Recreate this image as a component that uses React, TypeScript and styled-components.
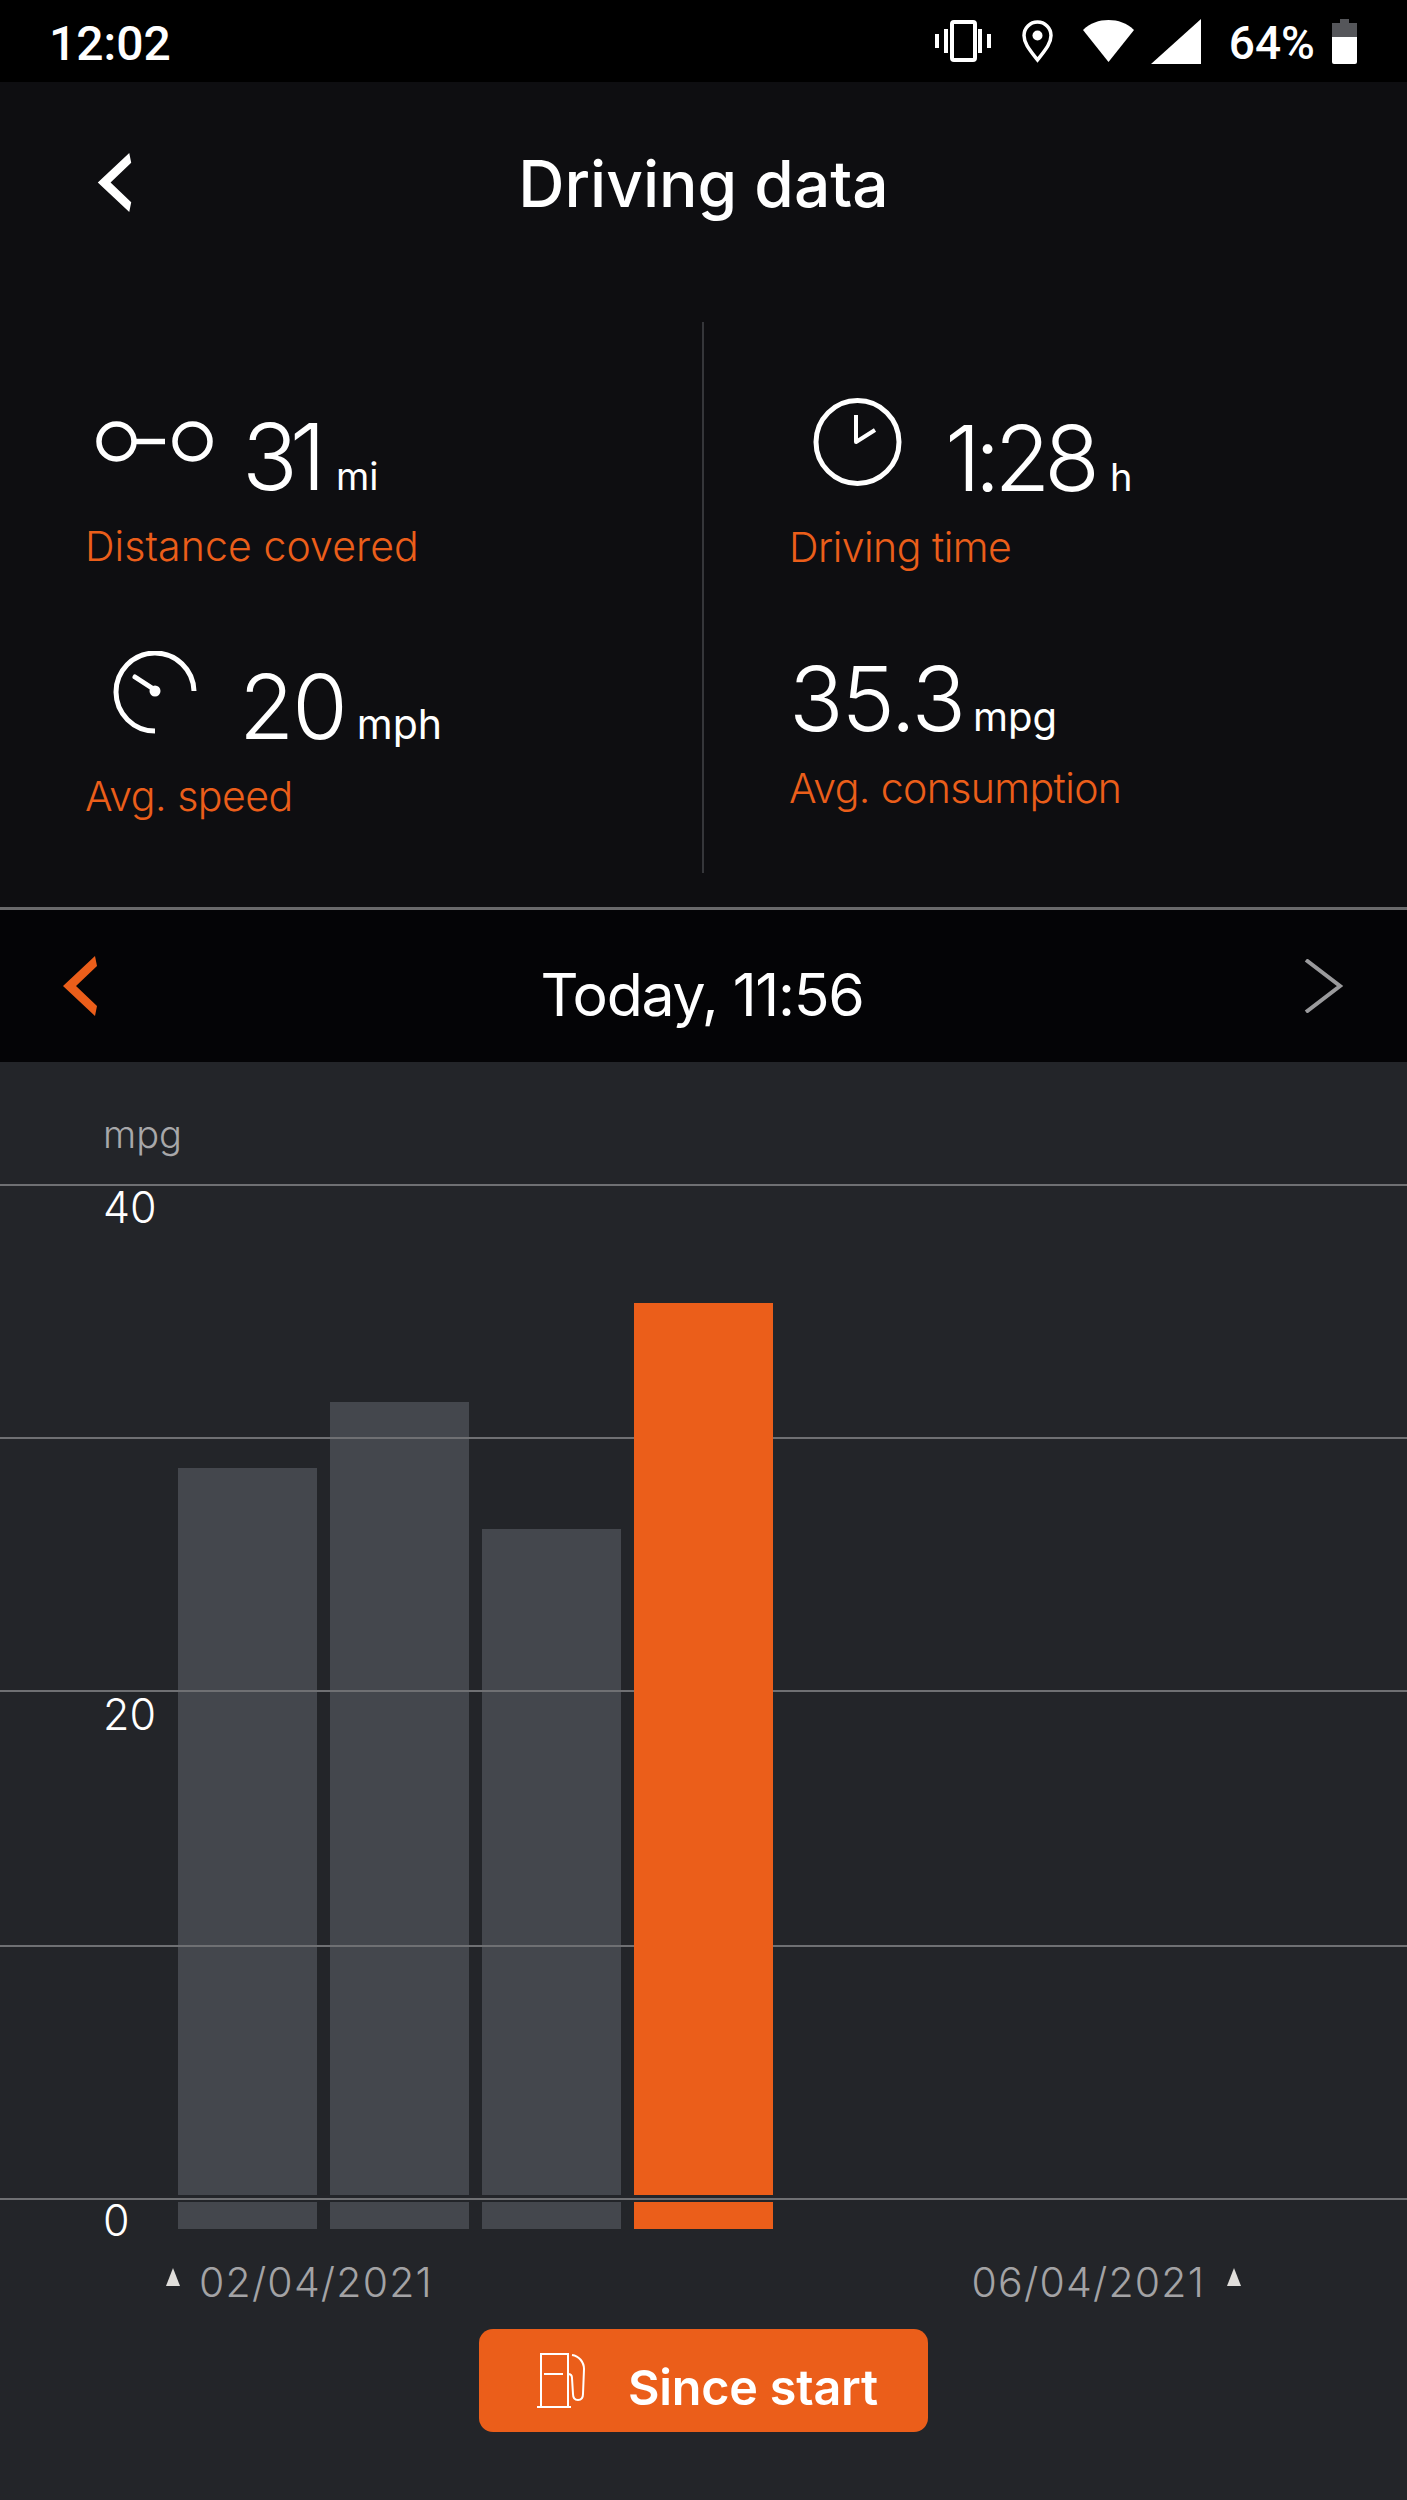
import styled, { createGlobalStyle } from "styled-components";

const orange = "#eb5e1a";
const FONT = `Inter, "Liberation Sans", sans-serif`;

const GRID_Y = [1, 254, 507, 762, 1015];
const BARS = [
  { x: 178, top: 284, on: false },
  { x: 330, top: 218, on: false },
  { x: 482, top: 345, on: false },
  { x: 634, top: 119, on: true },
];

const LeftChevron = ({ color, width, height }: { color: string; width: number; height: number }) => (
  <svg width={width} height={height} viewBox="0 0 34 60">
    <polygon points="32,0 34,10 13,30 34,50 32,60 0,30" fill={color} />
  </svg>
);

const App = () => {
  return (
    <>
      <GlobalStyle />
      <Page>
        <StatusBar>
          <Clock>12:02</Clock>
          <StatusIcons>
            <svg width="56" height="42" viewBox="0 0 56 42" fill="none" stroke="#fff">
              <rect x="17" y="2" width="23" height="38" rx="2" strokeWidth="4" />
              <path d="M11 9v24M2 14v14M45 9v24M54 14v14" strokeWidth="4" />
            </svg>
            <StatusGlyph $left={31} width="31" height="43" viewBox="0 0 31 43" fill="none" stroke="#fff" strokeWidth="3.5">
              <path d="M15.5 40C7 29 2 23 2 15.5a13.5 13.5 0 0 1 27 0C29 23 24 29 15.5 40z" />
              <circle cx="15.5" cy="15.5" r="5" fill="#fff" stroke="none" />
            </StatusGlyph>
            <StatusGlyph $left={30} width="51" height="42" viewBox="0 0 51 42">
              <path d="M25.500 42L0 10C7 3 16 0 25.500 0S44 3 51 10z" fill="#fff" />
            </StatusGlyph>
            <StatusGlyph $left={17} width="50" height="45" viewBox="0 0 50 45">
              <path d="M50 0V45H0z" fill="#fff" />
            </StatusGlyph>
            <BatteryText>64%</BatteryText>
            <StatusGlyph $left={17} width="25" height="45" viewBox="0 0 25 45">
              <path d="M8 0h9v4h8v15H0V4h8z" fill="#55565a" />
              <path d="M0 18h25v25a2 2 0 0 1-2 2H2a2 2 0 0 1-2-2z" fill="#fff" />
            </StatusGlyph>
          </StatusIcons>
        </StatusBar>

        <Header>
          <BackButton>
            <LeftChevron color="#fff" width={35} height={59} />
          </BackButton>
          <Title>Driving data</Title>
        </Header>

        <StatsPanel>
          <StatColumn $top={85} $gap={86}>
            <Stat>
              <ValueRow $gap={29} $indent={11}>
                <StatIcon $top={14} width="117" height="41" viewBox="0 0 117 41" fill="none" stroke="#fff" strokeWidth="5.500">
                  <circle cx="20.500" cy="20.500" r="17.500" />
                  <circle cx="96.500" cy="20.500" r="17.500" />
                  <path d="M39 20.500h30" />
                </StatIcon>
                <Value $size={92} $spacing={-8}>
                  31
                  <Unit $size={38} $gap={18}>mi</Unit>
                </Value>
              </ValueRow>
              <Label $spacing={0.1}>Distance covered</Label>
            </Stat>
            <Stat>
              <ValueRow $gap={42} $indent={28}>
                <StatIcon $top={-6} width="84" height="84" viewBox="0 0 84 84" fill="none" stroke="#fff" strokeWidth="5">
                  <path d="M81 40A39 39 0 1 0 42 80" />
                  <path d="M22 26L42 39" strokeLinecap="round" />
                  <circle cx="42" cy="40" r="5.500" fill="#fff" stroke="none" />
                </StatIcon>
                <Value $size={90}>
                  20
                  <Unit $size={41} $gap={11}>mph</Unit>
                </Value>
              </ValueRow>
              <Label $spacing={-0.5}>Avg. speed</Label>
            </Stat>
          </StatColumn>

          <Divider />

          <StatColumn $top={86} $gap={77}>
            <Stat>
              <ValueRow $gap={43} $indent={24}>
                <StatIcon $top={-10} width="89" height="88" viewBox="0 0 89 88" fill="none" stroke="#fff" strokeWidth="5">
                  <circle cx="44.500" cy="44" r="41.500" />
                  <path d="M43 17V44L62 32" strokeLinejoin="round" strokeWidth="4" />
                </StatIcon>
                <Value $size={91} $spacing={-6}>
                  1:28
                  <Unit $size={38} $gap={16}>h</Unit>
                </Value>
              </ValueRow>
              <Label $spacing={-0.5}>Driving time</Label>
            </Stat>
            <Stat>
              <ValueRow>
                <Value $size={90}>
                  35.3
                  <Unit $size={40} $gap={9}>mpg</Unit>
                </Value>
              </ValueRow>
              <Label $spacing={-0.6}>Avg. consumption</Label>
            </Stat>
          </StatColumn>
        </StatsPanel>

        <DateBar>
          <LeftChevron color={orange} width={34} height={60} />
          <DateText>Today, 11:56</DateText>
          <svg width="41" height="54" viewBox="0 0 41 54">
            <path d="M3 1L37 27L3 53" fill="none" stroke="#9a9a9c" strokeWidth="4" />
          </svg>
        </DateBar>

        <ChartPanel>
          <AxisUnit>mpg</AxisUnit>
          <ChartSvg width="1407" height="1046" viewBox="0 0 1407 1046">
            {BARS.filter((bar) => !bar.on).map((bar) => (
              <g key={bar.x} fill="#44474d">
                <rect x={bar.x} y={bar.top} width="139" height={1011 - bar.top} />
                <rect x={bar.x} y="1018" width="139" height="27" />
              </g>
            ))}
            {GRID_Y.map((y) => (
              <line key={y} x1="0" x2="1407" y1={y} y2={y} stroke="#6f7073" strokeWidth="2" />
            ))}
            {BARS.filter((bar) => bar.on).map((bar) => (
              <g key={bar.x} fill={orange}>
                <rect x={bar.x} y={bar.top} width="139" height={1011 - bar.top} />
                <rect x={bar.x} y="1018" width="139" height="27" />
              </g>
            ))}
            <TickText x="103" y="39">40</TickText>
            <TickText x="103" y="546">20</TickText>
            <TickText x="103" y="1052">0</TickText>
          </ChartSvg>
          <DateRange>
            <DateMark $gap={19}>
              <Tip />
              <DateLabel>02/04/2021</DateLabel>
            </DateMark>
            <DateMark $gap={22}>
              <DateLabel>06/04/2021</DateLabel>
              <Tip />
            </DateMark>
          </DateRange>
          <SinceButton>
            <svg width="49" height="55" viewBox="0 0 49 55" fill="none" stroke="#fff" strokeWidth="2">
              <path d="M4 54V1h27v53M0 54h34M7 21h19" />
              <path d="M35 2c7 1 12 7 12 14l-1 25c0 4-2 6-5 6s-5-2-5-6l-1-16c0-3-1-4-4-4" />
            </svg>
            <SinceLabel>Since start</SinceLabel>
          </SinceButton>
        </ChartPanel>
      </Page>
    </>
  );
};

export default App;

const GlobalStyle = createGlobalStyle`
  html, body {
    margin: 0;
    background: #232529;
  }
  svg {
    display: block;
    flex-shrink: 0;
  }
`;

const Page = styled.div`
  width: 1407px;
  height: 2500px;
  display: flex;
  flex-direction: column;
  background: #0e0e11;
  color: #fff;
  font-family: ${FONT};
  overflow: hidden;
`;

const StatusBar = styled.div`
  height: 82px;
  flex-shrink: 0;
  box-sizing: border-box;
  padding: 0 50px 0 49px;
  background: #000;
  display: flex;
  align-items: center;
  justify-content: space-between;
`;

const Clock = styled.span`
  padding-top: 4px;
  font-family: Roboto, sans-serif;
  font-size: 48px;
  font-weight: 500;
`;

const StatusIcons = styled.div`
  display: flex;
  align-items: center;
`;

const StatusGlyph = styled.svg<{ $left: number }>`
  margin-left: ${(p) => p.$left}px;
`;

const BatteryText = styled.span`
  margin-left: 28px;
  padding-top: 4px;
  font-family: Roboto, sans-serif;
  font-size: 46px;
  font-weight: 500;
`;

const Header = styled.div`
  height: 240px;
  flex-shrink: 0;
  box-sizing: border-box;
  position: relative;
  display: flex;
  align-items: flex-start;
  justify-content: center;
  padding-top: 67px;
`;

const BackButton = styled.div`
  position: absolute;
  left: 97px;
  top: 71px;
`;

const Title = styled.h1`
  margin: 0;
  font-size: 64px;
  line-height: 70px;
  font-weight: 500;
`;

const StatsPanel = styled.div`
  height: 551px;
  flex-shrink: 0;
  margin-bottom: 34px;
  display: grid;
  grid-template-columns: 702px 2px 1fr;
`;

const StatColumn = styled.div<{ $top: number; $gap: number }>`
  display: flex;
  flex-direction: column;
  padding: ${(p) => p.$top}px 0 0 85px;
  gap: ${(p) => p.$gap}px;
`;

const Stat = styled.div`
  display: flex;
  flex-direction: column;
`;

const ValueRow = styled.div<{ $gap?: number; $indent?: number }>`
  height: 100px;
  display: flex;
  align-items: flex-start;
  gap: ${(p) => p.$gap ?? 0}px;
  padding-left: ${(p) => p.$indent ?? 0}px;
`;

const StatIcon = styled.svg<{ $top: number }>`
  margin-top: ${(p) => p.$top}px;
`;

const Value = styled.span<{ $size: number; $spacing?: number }>`
  font-size: ${(p) => p.$size}px;
  line-height: 100px;
  font-weight: 300;
  letter-spacing: ${(p) => p.$spacing ?? -2}px;
`;

const Unit = styled.span<{ $size: number; $gap: number }>`
  font-size: ${(p) => p.$size}px;
  font-weight: 400;
  letter-spacing: 0;
  margin-left: ${(p) => p.$gap}px;
`;

const Label = styled.span<{ $spacing: number }>`
  margin-top: 14px;
  font-size: 41px;
  line-height: 50px;
  font-weight: 300;
  letter-spacing: ${(p) => p.$spacing}px;
  color: ${orange};
`;

const Divider = styled.div`
  background: #35363a;
`;

const DateBar = styled.div`
  height: 155px;
  flex-shrink: 0;
  box-sizing: border-box;
  border-top: 3px solid #69696b;
  background: #040406;
  display: flex;
  align-items: center;
  justify-content: space-between;
  padding: 0 63px;
`;

const DateText = styled.span`
  padding-top: 16px;
  margin-left: 4px;
  font-size: 59px;
  font-weight: 400;
  letter-spacing: -1.3px;
`;

const ChartPanel = styled.div`
  flex: 1;
  background: #232529;
  display: flex;
  flex-direction: column;
  align-items: center;
`;

const AxisUnit = styled.span`
  align-self: flex-start;
  height: 122px;
  box-sizing: border-box;
  padding: 50px 0 0 103px;
  font-size: 38px;
  line-height: 44px;
  font-weight: 300;
  color: #a8a8aa;
`;

const ChartSvg = styled.svg`
  overflow: visible;
`;

const TickText = styled.text`
  font-family: ${FONT};
  font-size: 43px;
  font-weight: 300;
  fill: #fff;
`;

const DateRange = styled.div`
  width: 100%;
  box-sizing: border-box;
  padding: 0 166px;
  margin-top: 27px;
  display: flex;
  justify-content: space-between;
`;

const DateMark = styled.div<{ $gap: number }>`
  display: flex;
  align-items: flex-start;
  gap: ${(p) => p.$gap}px;
`;

const Tip = styled.span`
  width: 0;
  height: 0;
  margin-top: 11px;
  border-left: 7.500px solid transparent;
  border-right: 7.500px solid transparent;
  border-bottom: 18px solid #e0dedb;
`;

const DateLabel = styled.span`
  font-size: 41px;
  line-height: 50px;
  font-weight: 300;
  letter-spacing: 1.2px;
  color: #a3a3a5;
`;

const SinceButton = styled.div`
  margin-top: 22px;
  width: 449px;
  height: 103px;
  box-sizing: border-box;
  border-radius: 14px;
  background: ${orange};
  display: flex;
  align-items: center;
  gap: 42px;
  padding-left: 58px;
`;

const SinceLabel = styled.span`
  padding-top: 14px;
  font-size: 48.500px;
  font-weight: 600;
  letter-spacing: -0.2px;
`;
